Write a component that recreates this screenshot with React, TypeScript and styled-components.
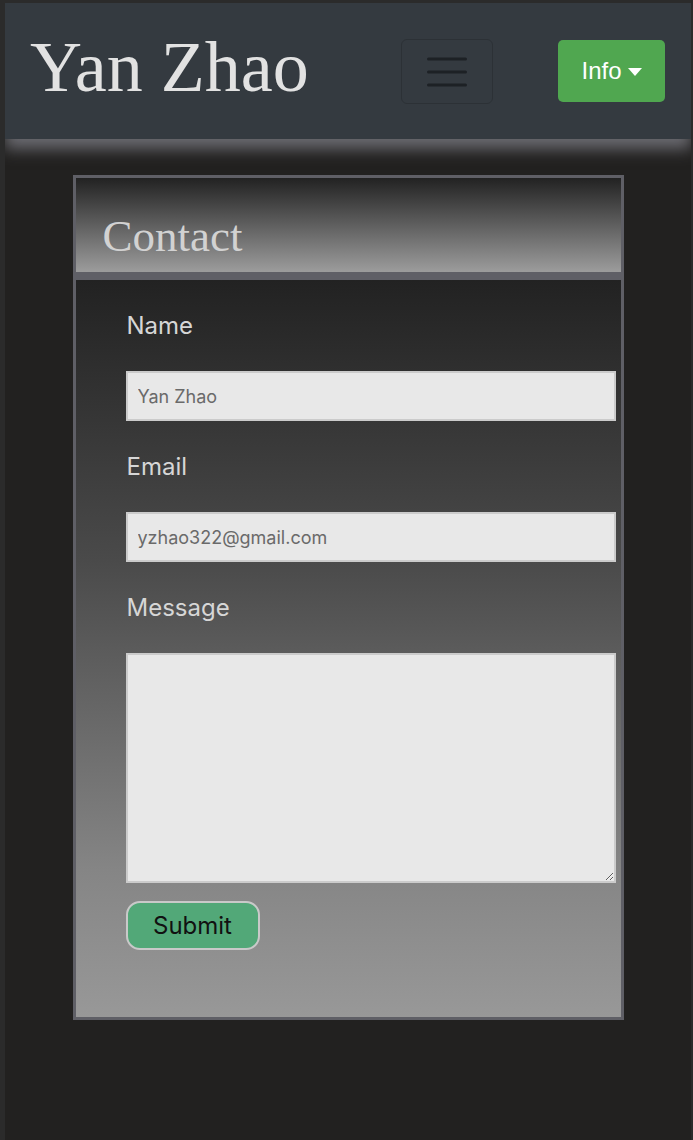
import React from "react";
import styled, { createGlobalStyle } from "styled-components";

const GlobalStyle = createGlobalStyle`
  html { background: #2b2b2b; }
  body {
    margin: 0;
    padding: 3px 2px 0 5px;
    background: #2b2b2b;
  }
  * { box-sizing: border-box; }
`;

const Page = styled.div`
  background: #222120;
  min-height: 1137px;
  overflow: hidden;
`;

const Navbar = styled.nav`
  display: flex;
  align-items: center;
  height: 136px;
  padding: 0 26px 0 25px;
  background: #343a40;
  box-shadow: 0 10px 14px rgba(118, 118, 124, 0.85);
  position: relative;
  z-index: 1;
`;

const Brand = styled.h1`
  margin: -8px 0 0;
  font-family: "Liberation Serif", Georgia, serif;
  font-weight: 400;
  font-size: 72px;
  line-height: 1;
  color: #e2e2e2;
`;

const Toggler = styled.button`
  margin-left: auto;
  margin-right: 65px;
  width: 92px;
  height: 65px;
  border: 1px solid #2c3136;
  border-radius: 6px;
  background: transparent;
  display: flex;
  align-items: center;
  justify-content: center;
  padding: 0;
`;

const InfoButton = styled.button`
  width: 107px;
  height: 62px;
  border: none;
  border-radius: 5px;
  background: #50a750;
  color: #fff;
  font-family: "Liberation Sans", Arial, sans-serif;
  font-size: 24px;
  display: flex;
  align-items: center;
  justify-content: center;
  gap: 6px;
  padding: 0;
`;

const Caret = styled.span`
  width: 0;
  height: 0;
  border-left: 7px solid transparent;
  border-right: 7px solid transparent;
  border-top: 8px solid #fff;
  margin-top: 1px;
`;

const Card = styled.section`
  width: 551px;
  margin: 36px auto 0;
  border: 3px solid #5f5f66;
  background: #5f5f66;
`;

const CardHeader = styled.header`
  height: 94px;
  background: linear-gradient(to bottom, #222 0%, #9c9c9c 100%);
  padding: 36px 0 0 27px;
  margin-bottom: 8px;
`;

const CardTitle = styled.h2`
  margin: 0;
  font-family: "Liberation Serif", Georgia, serif;
  font-weight: 400;
  font-size: 45px;
  line-height: 1;
  color: #d2d2d2;
`;

const CardBody = styled.form`
  background: linear-gradient(to bottom, #222 0%, #4a4a4a 38%, #858585 80%, #989898 100%);
  padding: 28px 5px 67px 50px;
  display: flex;
  flex-direction: column;
  align-items: flex-start;
`;

const Label = styled.label`
  font-family: Inter, "Liberation Sans", sans-serif;
  font-size: 24px;
  line-height: 36px;
  color: #d6d6d6;
  margin-bottom: 27px;
  margin-left: 1px;
`;

const Input = styled.input`
  width: 490px;
  height: 50px;
  background: #e8e8e8;
  border: 2px solid #cbcbcb;
  padding: 0 10px;
  font-family: Inter, "Liberation Sans", sans-serif;
  font-size: 18px;
  color: #6a6a6a;
  margin: 0 0 28px;
  outline: none;
`;

const TextArea = styled.textarea`
  width: 490px;
  height: 230px;
  background: #e8e8e8;
  border: 2px solid #cbcbcb;
  padding: 10px;
  font-family: Inter, "Liberation Sans", sans-serif;
  font-size: 18px;
  color: #6a6a6a;
  margin: 0 0 18px;
  outline: none;
  display: block;
`;

const SubmitButton = styled.button`
  width: 134px;
  height: 49px;
  background: #52a878;
  border: 2px solid #c9c9c9;
  border-radius: 14px;
  font-family: Inter, "Liberation Sans", sans-serif;
  font-size: 24px;
  color: #111;
  padding: 0;
`;

function Hamburger() {
  return (
    <svg width="40" height="32" viewBox="0 0 40 32">
      <g stroke="#1d2125" strokeWidth="3" strokeLinecap="round">
        <line x1="1.5" y1="4" x2="38.5" y2="4" />
        <line x1="1.5" y1="17" x2="38.5" y2="17" />
        <line x1="1.5" y1="30" x2="38.5" y2="30" />
      </g>
    </svg>
  );
}

export default function App() {
  return (
    <>
      <GlobalStyle />
      <Page>
        <Navbar>
          <Brand>Yan Zhao</Brand>
          <Toggler aria-label="Toggle navigation">
            <Hamburger />
          </Toggler>
          <InfoButton>
            Info
            <Caret />
          </InfoButton>
        </Navbar>
        <Card>
          <CardHeader>
            <CardTitle>Contact</CardTitle>
          </CardHeader>
          <CardBody onSubmit={(e) => e.preventDefault()}>
            <Label htmlFor="name">Name</Label>
            <Input id="name" defaultValue="Yan Zhao" />
            <Label htmlFor="email">Email</Label>
            <Input id="email" defaultValue="yzhao322@gmail.com" />
            <Label htmlFor="message">Message</Label>
            <TextArea id="message" />
            <SubmitButton type="submit">Submit</SubmitButton>
          </CardBody>
        </Card>
      </Page>
    </>
  );
}
